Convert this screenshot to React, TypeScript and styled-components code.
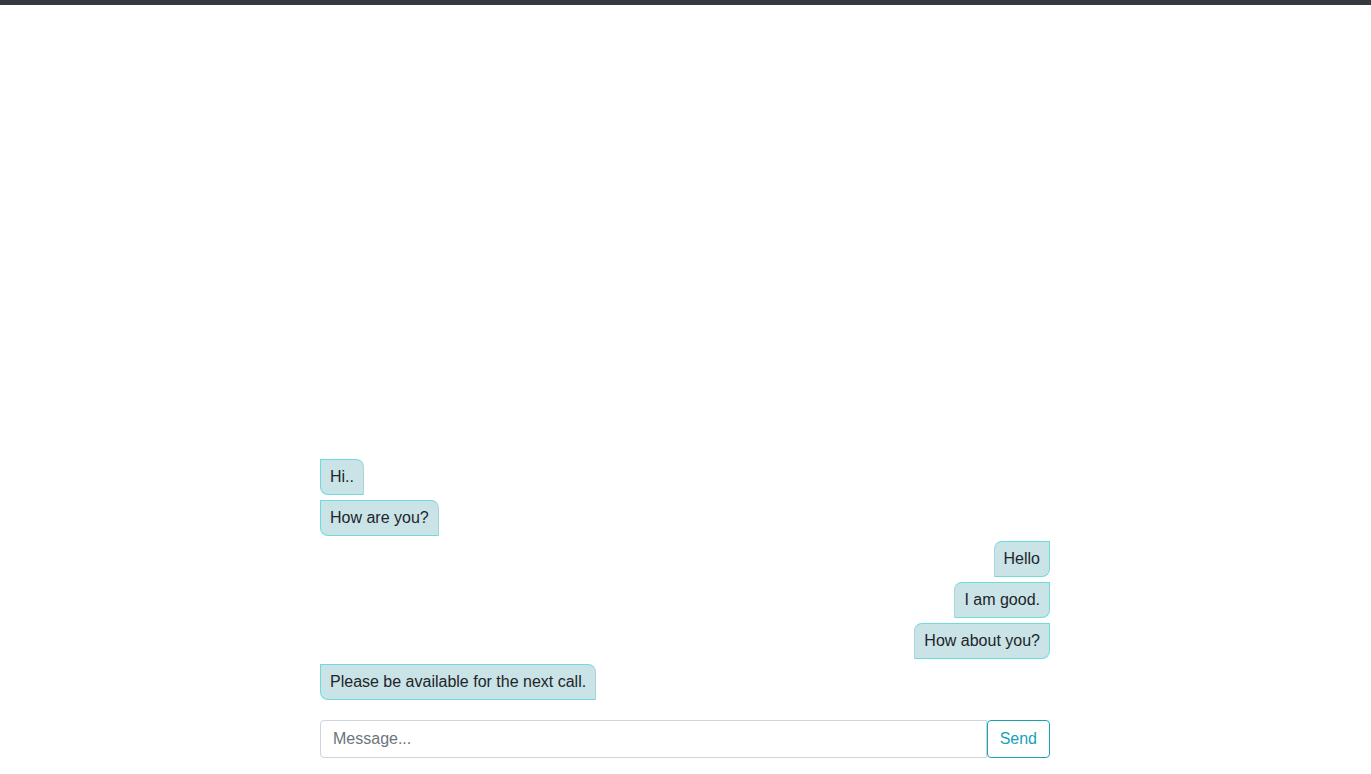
import React from "react";
import styled, { createGlobalStyle } from "styled-components";

const Global = createGlobalStyle`
  html, body { margin: 0; padding: 0; background: #fff; }
  body { font-family: "Liberation Sans", Arial, sans-serif; font-size: 16px; line-height: 1.5; color: #212529; }
  * { box-sizing: border-box; }
`;

const Page = styled.div`
  height: 774px;
  border-top: 5px solid #343a40;
  display: flex;
  justify-content: flex-start;
  padding-left: 320px;
`;

const Chat = styled.div`
  width: 730px;
  display: flex;
  flex-direction: column;
  justify-content: flex-end;
  padding-bottom: 16px;
`;

const Messages = styled.div`
  display: flex;
  flex-direction: column;
  gap: 5px;
  margin-bottom: 20px;
`;

const Bubble = styled.div<{ $mine?: boolean }>`
  align-self: ${(p) => (p.$mine ? "flex-end" : "flex-start")};
  background: #c9e3e7;
  border: 1px solid #6edcdc;
  ${(p) => (p.$mine ? "border-left-color: #a9d4d8;" : "border-right-color: #a9d4d8;")}
  border-radius: ${(p) => (p.$mine ? "8px 0 8px 0" : "0 8px 0 8px")};
  padding: 5px 9px;
  line-height: 24px;
  font-size: 16px;
  color: #212529;
`;

const InputGroup = styled.div`
  display: flex;
`;

const Input = styled.input`
  flex: 1;
  height: 38px;
  padding: 6px 12px;
  font-family: inherit;
  font-size: 16px;
  color: #495057;
  border: 1px solid #ced4da;
  border-radius: 4px 0 0 4px;
  outline: none;
  &::placeholder { color: #6c757d; }
`;

const SendButton = styled.button`
  height: 38px;
  padding: 6px 12px;
  font-family: inherit;
  font-size: 16px;
  line-height: 24px;
  color: #17a2b8;
  background: transparent;
  border: 1px solid #17a2b8;
  border-radius: 4px;
  cursor: pointer;
`;

const messages = [
  { text: "Hi..", mine: false },
  { text: "How are you?", mine: false },
  { text: "Hello", mine: true },
  { text: "I am good.", mine: true },
  { text: "How about you?", mine: true },
  { text: "Please be available for the next call.", mine: false },
];

export default function App() {
  return (
    <>
      <Global />
      <Page>
        <Chat>
          <Messages>
            {messages.map((m, i) => (
              <Bubble key={i} $mine={m.mine}>
                {m.text}
              </Bubble>
            ))}
          </Messages>
          <InputGroup>
            <Input placeholder="Message..." />
            <SendButton>Send</SendButton>
          </InputGroup>
        </Chat>
      </Page>
    </>
  );
}
